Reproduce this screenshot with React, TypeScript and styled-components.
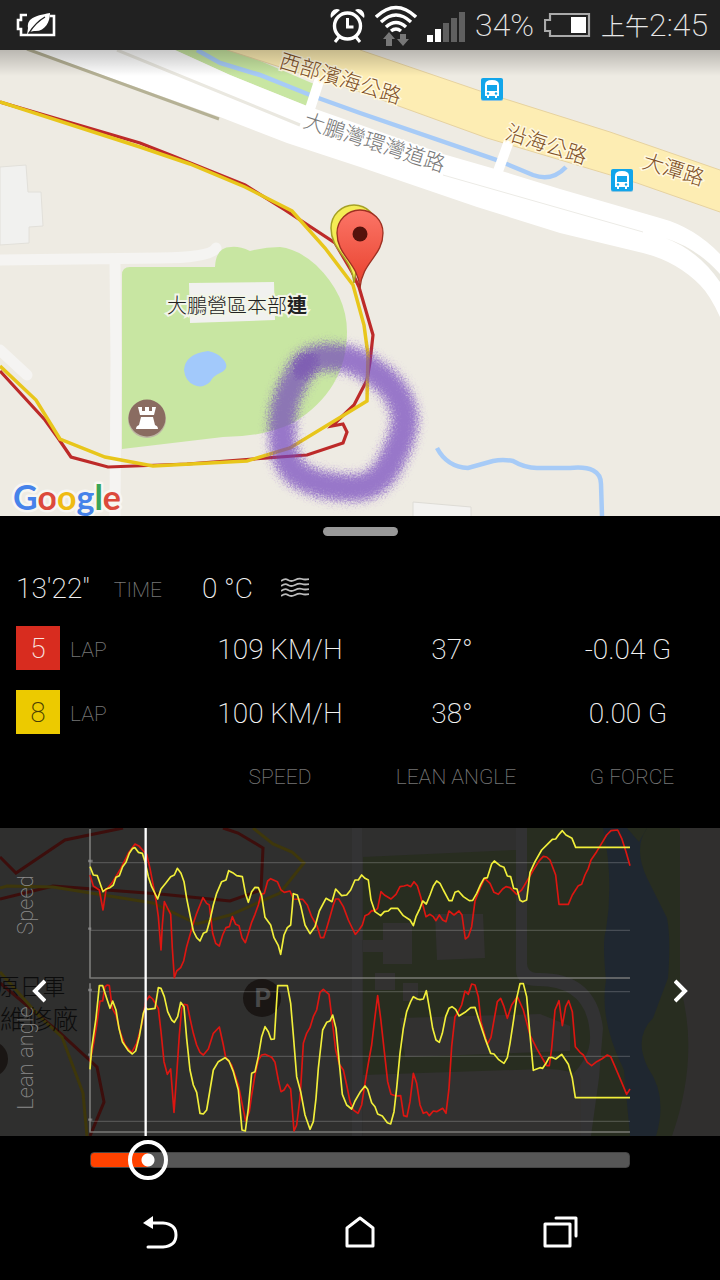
import React, { useState } from 'react';
import styled, { createGlobalStyle } from 'styled-components';

const Global = createGlobalStyle`
  * { box-sizing: border-box; }
  html, body { margin: 0; background: #000; }
  body { font-family: Roboto, "Noto Sans CJK TC", sans-serif; font-weight: 300; color: #f2f2f2; }
  button { font: inherit; color: inherit; background: none; border: 0; padding: 0; cursor: pointer; }
`;

const Screen = styled.main`
  display: flex;
  flex-direction: column;
  min-height: 100vh;
  background: #000;
`;

const StatusBar = styled.header`
  display: flex;
  align-items: center;
  height: 50px;
  padding: 0 12px 0 16px;
  gap: 10px;
  background: #212121;
  color: #e8e8e8;
  font-size: 32px;
  line-height: 50px;
  font-weight: 200;
  white-space: nowrap;
`;

const Spacer = styled.span`
  flex: 1;
`;

const Clock = styled.time`
  display: flex;
  align-items: center;
`;

const Meridiem = styled.span`
  font-size: 24px;
  font-family: "Noto Sans CJK TC", sans-serif;
  font-weight: 200;
`;

const Drawing = styled.svg`
  display: block;
  width: 100%;
  height: auto;
`;

const Icon = styled.svg`
  display: block;
  flex: none;
`;

const MapLabel = styled.text<{ $tone?: string; $size?: number }>`
  font-family: "Noto Sans CJK TC", sans-serif;
  font-size: ${p => p.$size ?? 21}px;
  font-weight: 300;
  fill: ${p => p.$tone ?? '#7d4e24'};
  text-anchor: middle;
  dominant-baseline: central;
  paint-order: stroke;
`;

const Wordmark = styled.text`
  font-family: Lato, sans-serif;
  font-size: 34px;
  font-weight: 700;
  paint-order: stroke;
  stroke: #f7f6f2;
  stroke-width: 5px;
  stroke-linejoin: round;
`;

const Panel = styled.section`
  display: flex;
  flex-direction: column;
  padding-bottom: 20px;
`;

const Handle = styled.button`
  align-self: center;
  width: 75px;
  height: 9px;
  margin: 11px 0 20px;
  border-radius: 5px;
  background: #999;
`;

const Summary = styled.div`
  display: flex;
  align-items: center;
  height: 60px;
  padding: 4px 16px 0;
  font-size: 28px;
`;

const Value = styled.span<{ $gap?: number }>`
  margin-left: ${p => p.$gap ?? 0}px;
  font-size: 28px;
  font-weight: 200;
`;

const Caption = styled.span<{ $gap?: number }>`
  margin-left: ${p => p.$gap ?? 0}px;
  padding-top: 4px;
  font-size: 21px;
  color: #777;
  font-weight: 200;
`;

const WindIcon = styled.svg`
  display: block;
  flex: none;
  margin-left: 28px;
`;

const Stats = styled.table`
  width: 100%;
  table-layout: fixed;
  border-collapse: collapse;
  font-size: 28px;
  line-height: 32px;
  font-weight: 200;
  td, th { padding: 0; height: 64px; text-align: center; font-weight: inherit; vertical-align: middle; }
  th:first-child { width: 192px; padding-left: 16px; }
  td { padding: 4px 0 0; }
  td + td { padding-right: 8px; }
  tfoot th { padding-top: 2px; font-size: 21px; line-height: 24px; color: #777; }
`;

const LapCell = styled.span`
  display: flex;
  align-items: center;
`;

const LapBadge = styled.span<{ $bg: string; $ink: string }>`
  display: grid;
  place-items: center;
  width: 44px;
  height: 44px;
  padding-top: 2px;
  background: ${p => p.$bg};
  color: ${p => p.$ink};
`;

const ChartArea = styled.section`
  position: relative;
  background: #2f2f2e;
`;

const Arrow = styled.button<{ $side: 'left' | 'right' }>`
  position: absolute;
  top: 53%;
  ${p => p.$side}: 23px;
  width: 32px;
  height: 40px;
  transform: translateY(-50%);
  display: grid;
  place-items: center;
`;

const AxisName = styled.text`
  font-size: 22px;
  font-weight: 200;
  fill: #8a8a8a;
  text-anchor: middle;
  dominant-baseline: central;
`;

const SliderRow = styled.div`
  display: flex;
  align-items: center;
  height: 48px;
  padding: 0 90px;
`;

const Slider = styled.input`
  appearance: none;
  flex: 1;
  min-width: 0;
  height: 16px;
  margin: 0;
  border-radius: 4px;
  border: 1px solid #444;
  background: linear-gradient(to right, #ff4200 var(--filled), #565656 var(--filled));
  &::-webkit-slider-thumb {
    appearance: none;
    width: 40px;
    height: 40px;
    border: 4px solid #fff;
    border-radius: 50%;
    background: radial-gradient(circle, #fff 6px, transparent 7px);
  }
`;

const NavBar = styled.nav`
  display: flex;
  height: 96px;
  padding: 0 60px;
`;

const NavButton = styled.button`
  flex: 1;
  display: grid;
  place-items: center;
`;

const PowerSaverIcon = () => (
  <Icon width="40" height="24" viewBox="0 0 40 24" fill="none" stroke="#fff" strokeWidth="2.6">
    <path d="M11 2H5v5H2v9h3v6h33V3h-4" />
    <path d="M12 15C11 6 17 3 34 0c0 9-5 19-16 18l-5 1-2 3" fill="#fff" stroke="none" />
    <path d="M13 20c5-8 9-12 16-16" stroke="#212121" strokeWidth="1.4" />
  </Icon>
);

const AlarmIcon = () => (
  <Icon width="35" height="36" viewBox="0 0 35 36" fill="none" stroke="#fff" strokeWidth="3.4">
    <circle cx="17.500" cy="19" r="13" />
    <path d="M17.500 11v9h6M9 30l-4 5M26 30l4 5" strokeWidth="3" />
    <path d="M1 11C-1 5 5 0 10 3zM34 11c2-6-4-11-9-8z" fill="#fff" stroke="none" />
  </Icon>
);

const WifiIcon = () => (
  <Icon width="42" height="41" viewBox="0 0 42 41" fill="none" stroke="#fff" strokeWidth="3.400">
    <path d="M1 12q20-19 40 0M6 17q15-14 30 0M11 22q10-9 20 0M16 26q5-4 10 0" />
    <path d="M14 27l6 7h-3v7h-6v-7H8zM28 41l-6-7h3v-5h6v5h3z" fill="#777" stroke="none" />
  </Icon>
);

const SignalIcon = () => (
  <Icon width="38" height="34" viewBox="0 0 38 34">
    <path d="M0 27h6v7H0zM8 21h6v13H8z" fill="#fff" />
    <path d="M16 15h6v19h-6zM24 10h6v24h-6zM32 4h6v30h-6z" fill="#606060" />
  </Icon>
);

const BatteryIcon = () => (
  <Icon width="47" height="24" viewBox="0 0 47 24">
    <path d="M6 1h39v22H6v-5H1V7h5z" fill="none" stroke="#aaa" strokeWidth="2.200" />
    <path d="M27 4h15v16H27z" fill="#fff" />
  </Icon>
);

const BusStop = ({ x, y }: { x: number; y: number }) => (
  <g transform={`translate(${x} ${y})`}>
    <rect x="-11" y="-10" width="22" height="22" rx="2" fill="#8fc4dd" />
    <rect x="-11" y="-11" width="22" height="22" rx="2" fill="#12a5ea" />
    <path d="M-7 7V-4q0-5 7-5t7 5V7H5v2H3V7h-6v2h-2V7z" fill="#fff" />
    <path d="M-5-4H5v6H-5z" fill="#12a5ea" />
    <circle cx="-4" cy="4.500" r="1.200" fill="#12a5ea" />
    <circle cx="4" cy="4.500" r="1.200" fill="#12a5ea" />
  </g>
);

const pinShape = 'M0 54C-2 28-23 22-23-1a23 23 0 0 1 46 0C23 22 2 28 0 54z';
const redTrack =
  'M0 52L140 93L173 106L245 135L285 160L335 193L352 222L359 237L373 285L370 312L367 330L354 355L332 376L343 374L347 382L343 393L307 405L187 414L108 417L71 407L58 388L45 370L0 321';
const yellowTrack =
  'M0 52L140 97L190 114L245 137L292 161L325 198L353 235L364 275L368 305L367 351L290 398L247 411L153 416L105 407L60 389L36 350L0 316';
const marker =
  'M328 307C312 307 304 312 298 325C286 345 282 360 282 380C283 402 284 410 296 423C312 434 330 437 353 438C374 438 386 425 394 405C402 390 406 375 404 362C400 345 388 330 372 321C356 309 342 307 328 307z';

const TrackMap = () => (
  <Drawing viewBox="0 0 720 466" role="img" aria-label="Track map">
    <defs>
      <linearGradient id="shade" x2="0" y2="1">
        <stop offset="0" stopColor="#000" stopOpacity=".22" />
        <stop offset="1" stopColor="#000" stopOpacity="0" />
      </linearGradient>
      <linearGradient id="pin" x2="0" y2="1">
        <stop offset="0" stopColor="#fb7567" />
        <stop offset="1" stopColor="#e8402c" />
      </linearGradient>
      <filter id="spray" x="-20%" y="-20%" width="140%" height="140%">
        <feGaussianBlur stdDeviation="4" result="soft" />
        <feTurbulence type="fractalNoise" baseFrequency=".6" numOctaves="2" seed="4" result="noise" />
        <feDisplacementMap in="soft" in2="noise" scale="12" xChannelSelector="R" yChannelSelector="G" />
      </filter>
    </defs>
    <rect width="720" height="466" fill="#eeebe3" />
    <path d="M175 0h60l79 34-7 22-77-31z" fill="#c8e6a2" />
    <path d="M227 0h133L483 42 610 82l110 38v42l-83-29-150-45-127-46-80-25z" fill="#fdedb3" />
    <path d="M360 0L483 42 610 82l110 38M227 0l53 17 80 25 127 46 150 45 83 29" fill="none" stroke="#e6d2a0" />
    <path d="M197 0l23 13 40 12 50 20 50 18 137 47 36 15q19 7 33-8" fill="none" stroke="#a7cbf7" strokeWidth="4.500" />
    <path d="M32 0h143l55 25 77 31 136 48 52 15 65 20 100 29q34 9 60 36v63q-10-22-20-32-24-24-57-32l-83-20-83-26-117-40-73-24-67-26z" fill="#fff" />
    <path d="M309 62l11-34M497 124l12-33" stroke="#fff" strokeWidth="10" />
    <path d="M117 0l183 75" stroke="#eae8e0" strokeWidth="3" />
    <path d="M443 125l200 57" stroke="#ecebe6" />
    <path d="M665 188q32 10 55 36v8q-22-32-55-44z" fill="#eae8e0" />
    <path d="M27-1l192 70" stroke="#b5b195" strokeWidth="3" />
    <path d="M0 117l26-2 2 27h13l2 34-14 1v16L0 195z" fill="#f1f1ef" stroke="#e2e0da" />
    <path d="M0 210l160-2q50 0 56-10M115 213l1 100-1 153M0 300l27 25" fill="none" stroke="#f5f4f2" strokeWidth="11" strokeLinecap="round" strokeLinejoin="round" />
    <path d="M122 225q0-8 8-8h85q1-20 16-20 8-1 19 4 15-4 30-4 18 2 36 18 31 30 31 67 0 58-54 91-30 14-70 14l-101 12z" fill="#c8e6a2" />
    <path d="M189 233l85-1 1 38-85 3z" fill="#f1f1ef" />
    <path d="M184 320q1-16 24-19 10 2 15 8 8 9-3 14-7 3-10 9-8 7-16 3-9-4-10-15z" fill="#a2c9fb" />
    <path d="M437 398q10 19 31 20l25-7q10-2 20 0 12 7 24 7h33q31-3 31 16l1 32" fill="none" stroke="#a7cbf7" strokeWidth="4.500" />
    <path d="M413 466v-14l58 5v9" fill="#f3f2f0" stroke="#dedcd6" />
    <path d={redTrack} fill="none" stroke="#bd2a29" strokeWidth="3.200" />
    <path d={yellowTrack} fill="none" stroke="#e8c61b" strokeWidth="3.500" />
    <g transform="translate(147 368)">
      <circle cy="1" r="19" fill="#bdb5a3" />
      <circle r="18.500" fill="#8a6c61" />
      <path d="M-9-11h4v4h3v-4h4v4h3v-4h4l-2 8H-7zM-6-1H6L8 7q3 1 3 4h-22q0-3 3-4z" fill="#fff" />
    </g>
    <path d={marker} fill="none" stroke="#7040bd" strokeOpacity=".68" strokeWidth="27" filter="url(#spray)" />
    <path d="M297 327q8-16 20-20" fill="none" stroke="#6636b3" strokeOpacity=".35" strokeWidth="22" filter="url(#spray)" />
    <g transform="translate(354 179)">
      <path d={pinShape} fill="#f4ec55" stroke="#a5a126" strokeWidth="1.500" />
    </g>
    <g transform="translate(360 184)">
      <path d={pinShape} fill="url(#pin)" stroke="#9e3022" strokeWidth="1.300" />
      <circle r="7.500" fill="#54120c" />
    </g>
    <g stroke="#fff8df" strokeWidth="3">
      <MapLabel transform="translate(341 27) rotate(17)">西部濱海公路</MapLabel>
      <MapLabel transform="translate(547 93) rotate(18)">沿海公路</MapLabel>
      <MapLabel transform="translate(674 118) rotate(17)">大潭路</MapLabel>
    </g>
    <MapLabel transform="translate(375 91) rotate(18)" $tone="#777" stroke="#fff" strokeWidth="3">大鵬灣環灣道路</MapLabel>
    <MapLabel x="237" y="254" $tone="#222" $size={20} stroke="#f2f5e8" strokeWidth="4">
      大鵬營區本部<tspan fontWeight="700">連</tspan>
    </MapLabel>
    <BusStop x={492} y={39} />
    <BusStop x={622} y={130} />
    <Wordmark x="13" y="460">
      <tspan fill="#4683ea">G</tspan><tspan fill="#dc4a3c">o</tspan><tspan fill="#efbb14">o</tspan>
      <tspan fill="#4683ea">g</tspan><tspan fill="#39a457">l</tspan><tspan fill="#dc4a3c">e</tspan>
    </Wordmark>
    <rect width="720" height="26" fill="url(#shade)" />
  </Drawing>
);

// Samples are recorded in two halves, each with x counted from its own start.
const halfLap = 810;
const series = (first: string, second: string) =>
  first + ' ' + second.split(' ').map(p => {
    const [x, y] = p.split(',').map(Number);
    return `${x + halfLap},${y}`;
  }).join(' ');

const speedRed = series(
  '30,150 40,183 58,195 69,255 78,195 95,175 120,135 145,85 165,57 178,64 190,78 200,88 210,130 228,225 235,275 243,375 247,300 253,230 263,250 272,268 277,370 283,458 290,438 302,428 311,408 320,365 330,330 340,295 350,265 360,240 369,218 380,235 388,240 398,325 407,355 418,363 428,330 438,308 448,305 457,275 467,298 477,302 486,338 496,353 505,325 515,292 525,268 535,240 543,208 553,205 563,168 572,161 592,170 603,195 613,202 630,198 640,222 668,223 682,240 695,275 712,305 722,338 731,338 740,310 750,275 760,240 767,222 776,222 790,245 805,285',
  '8,312 16,328 25,318 37,300 45,272 55,268 65,257 74,258 83,250 93,200 103,210 123,222 138,208 150,185 162,183 172,180 182,185 192,170 202,182 212,215 220,245 228,275 240,268 250,275 258,287 268,270 278,285 288,290 297,258 312,270 327,258 336,270 346,342 355,335 365,305 375,228 390,190 404,160 420,175 432,202 445,208 458,192 468,185 480,188 500,208 515,195 530,170 550,135 568,107 580,94 590,96 600,105 617,150 627,238 655,238 667,210 685,182 695,178 705,150 715,130 723,105 740,80 755,55 770,30 783,17 803,15 815,40 828,80 840,122'
);
const speedYellow = series(
  '30,125 40,150 52,152 60,175 69,200 78,192 90,188 100,180 108,157 118,152 128,125 138,112 148,85 158,70 165,68 175,82 187,85 195,110 205,155 215,185 233,222 243,192 257,175 272,155 283,150 292,130 303,145 312,170 320,220 330,270 340,318 350,338 360,348 370,325 380,320 390,285 400,240 410,205 425,170 438,165 446,137 458,143 470,152 487,155 497,208 505,232 515,200 525,187 535,188 545,212 555,277 572,300 582,338 595,362 602,388 612,330 622,308 632,300 637,245 640,206 652,210 662,242 675,300 690,326 705,305 718,258 738,220 756,230 767,192 785,212 800,210 812,195 825,165 835,165 845,150 855,160',
  '55,165 63,225 75,260 92,272 103,260 115,258 123,250 143,250 160,272 180,285 190,302 198,275 210,250 218,228 229,237 240,210 250,183 260,168 270,175 280,195 297,227 306,227 315,202 325,198 340,215 358,227 368,226 380,205 392,178 402,160 412,158 425,117 433,108 450,122 462,127 472,153 482,155 491,190 501,192 510,226 518,230 530,225 540,142 555,110 575,75 595,55 607,43 617,42 627,28 637,17 648,30 666,40 677,67 840,67'
);
const leanRed = series(
  '30,260 40,210 50,150 60,78 68,78 75,35 82,30 88,32 97,100 108,120 120,170 135,210 155,232 170,205 185,150 197,80 208,63 218,72 235,100 243,170 252,260 262,298 272,282 282,412 290,300 298,180 305,100 312,88 322,90 330,130 340,175 350,210 360,232 370,240 385,222 400,175 418,156 430,210 437,247 455,270 475,330 485,380 497,438 508,410 515,360 525,300 535,255 545,240 555,238 575,247 585,262 595,315 603,350 612,345 622,328 632,342 642,468 650,450 660,370 665,290 670,205 680,175 690,158 700,125 710,105 720,52 730,43 747,58 757,140 767,225 778,268 790,285 800,330',
  '0,380 10,405 24,415 35,390 45,325 55,265 65,210 75,125 83,62 92,130 103,230 113,320 123,358 138,363 152,362 161,422 171,425 180,380 190,295 200,325 210,390 220,415 230,411 238,422 250,408 260,410 278,400 288,415 297,340 305,215 315,125 325,110 335,90 345,48 355,58 365,27 375,30 385,65 393,140 412,208 423,187 433,130 442,80 452,70 462,95 472,130 485,90 502,65 520,105 540,180 560,220 580,255 590,272 598,272 605,220 615,105 627,77 637,152 647,95 656,77 667,110 676,215 690,232 700,240 712,262 725,272 740,260 755,252 772,240 782,245 795,275 810,310 830,358 840,342'
);
const leanYellow = series(
  '30,283 35,220 48,130 58,32 68,32 80,70 90,100 98,78 108,105 117,160 127,200 145,227 157,237 167,228 178,185 190,115 197,98 203,103 225,100 235,38 243,40 253,65 263,110 275,135 283,142 293,125 302,82 312,95 320,190 330,285 340,330 350,352 360,415 370,417 380,405 390,345 400,285 415,260 435,248 447,258 460,290 475,345 480,400 486,465 496,468 505,400 515,295 525,290 535,245 545,185 555,155 565,170 573,193 583,192 588,110 593,32 622,32 632,85 640,180 650,305 662,350 675,420 690,463 700,440 708,370 715,280 728,165 740,142 750,138 758,120 768,160 778,265 787,358 800,390',
  '5,402 15,378 30,352 45,333 53,343 65,383 75,395 83,417 97,423 112,443 122,447 132,410 140,340 150,235 160,160 170,110 182,80 190,65 202,72 210,74 220,72 229,47 240,110 248,160 258,195 268,202 277,175 287,125 297,100 306,95 317,103 327,123 345,112 362,98 375,97 390,145 405,190 422,235 432,237 445,253 462,265 472,248 480,205 490,140 500,70 510,26 520,26 530,65 540,180 550,286 570,278 578,280 588,265 597,248 605,247 617,252 635,238 655,268 667,310 676,368 840,368'
);

const DimMap = () => (
  <g fill="none">
    <path d="M363 29l153-7V0h204v308H363z" fill="#282d20" />
    <path d="M516 0h11v135q0 9 9 10 60-2 67 55l-4 50-8 58h-10v-48l-10-12q20-20 19-40-2-50-52-50-22 0-22-16z" fill="#323233" />
    <path d="M363 112h20v-17h29v41h-29v-12h-20zM375 145h20v17h-20zM403 155h15v18h-15zM435 86h48l2 44-48 2zM400 190l140-4 30 12v25l-165 6zM363 247l180-6q28-1 38 10v57H363z" fill="#323130" />
    <path d="M603 0h44q-14 20 0 50l20 40q4 20 1 60l-15 40q-20 20-5 50 20 28 8 68h-26l-6-66q-25-50-18-90-4-40 0-50 8-50-3-102z" fill="#1f2730" />
    <path d="M627 0h20l-8 14z" fill="#282d20" />
    <path d="M680 0h40v308h-48q28-80 8-150z" fill="#302f2e" />
    <path d="M352 0h10v308h-10z" fill="#333334" />
    <g strokeWidth="3">
      <path d="M0 29l16 16 49-33 58-12M223 0l15 5 25 15-2 42-31 11-70-7-107-8L0 71M0 155l60 50 37 34 7 35-14 34" stroke="#3c0e0c" />
      <path d="M0 60l7-2 46 1 100 16 44 21 33-9 50-22 24-30-12-11-19-8-20-16M0 144l40 45 22 20 21 56 4 43" stroke="#3e370b" />
    </g>
    <circle cx="-10" cy="231" r="18" fill="#1a1614" />
    <circle cx="262" cy="170" r="19" fill="#1a1614" />
    <MapLabel x="263" y="170" $tone="#484848" $size={26}><tspan fontFamily="Roboto" fontWeight="700">P</tspan></MapLabel>
    <MapLabel x="31" y="157" $tone="#0c0c0c" $size={23}>原日軍</MapLabel>
    <MapLabel x="39" y="189" $tone="#0c0c0c" $size={26}>維修廠</MapLabel>
  </g>
);

const Chart = () => (
  <Drawing viewBox="0 0 720 308" role="img" aria-label="Speed and lean angle by lap">
    <DimMap />
    <g transform="translate(80 -3) scale(.33333)" fill="none" strokeLinejoin="round">
      <path d="M30 113H1650M30 316H1650M30 500H1650M30 694H1650M30 889H1650" stroke="#fff" strokeOpacity=".18" strokeWidth="4" />
      <path d="M30 12V459H1650M30 475V921H1650" stroke="#8c8c8a" strokeOpacity=".8" strokeWidth="5" />
      <path d="M24 108h14M24 311h10M24 495h12M24 689h8M24 884h13" stroke="#999" strokeOpacity=".6" strokeWidth="7" />
      <g strokeWidth="5">
        <polyline points={speedRed} stroke="#dd1611" />
        <polyline points={speedYellow} stroke="#f1ef3a" />
        <g transform="translate(0 450)">
          <polyline points={leanRed} stroke="#dd1611" />
          <polyline points={leanYellow} stroke="#f1ef3a" />
        </g>
      </g>
      <path d="M197 9V933" stroke="#fff" strokeWidth="7" />
    </g>
    <AxisName transform="translate(25 77) rotate(-90)">Speed</AxisName>
    <AxisName transform="translate(25 230) rotate(-90)">Lean angle</AxisName>
  </Drawing>
);

const laps = [
  { lap: 5, bg: '#d82c1f', ink: '#f8e4e0', speed: '109 KM/H', lean: '37°', force: '-0.04 G' },
  { lap: 8, bg: '#ecca00', ink: '#4a4000', speed: '100 KM/H', lean: '38°', force: '0.00 G' },
];

export default function App() {
  const [position, setPosition] = useState(37);
  const filled = `calc(20px + (100% - 40px) * ${position / 500})`;

  return (
    <Screen>
      <Global />
      <StatusBar>
        <PowerSaverIcon />
        <Spacer />
        <AlarmIcon />
        <WifiIcon />
        <SignalIcon />
        <span>34%</span>
        <BatteryIcon />
        <Clock><Meridiem>上午</Meridiem>2:45</Clock>
      </StatusBar>
      <TrackMap />
      <Panel>
        <Handle aria-label="Resize panel" />
        <Summary>
          <Value>13'22"</Value>
          <Caption $gap={24}>TIME</Caption>
          <Value $gap={40}>0 °C</Value>
          <WindIcon width="28" height="22" viewBox="0 0 28 22" fill="none" stroke="#bbb" strokeWidth="1.800">
            {[3, 8, 13, 18].map(y => (
              <path key={y} d={`M0 ${y + 1}q4-3 7-1t7 0 7-1 7 0`} />
            ))}
          </WindIcon>
        </Summary>
        <Stats>
          <tbody>
            {laps.map(l => (
              <tr key={l.lap}>
                <th scope="row">
                  <LapCell>
                    <LapBadge $bg={l.bg} $ink={l.ink}>{l.lap}</LapBadge>
                    <Caption $gap={10}>LAP</Caption>
                  </LapCell>
                </th>
                <td>{l.speed}</td>
                <td>{l.lean}</td>
                <td>{l.force}</td>
              </tr>
            ))}
          </tbody>
          <tfoot>
            <tr>
              <th aria-hidden="true" />
              <th scope="col">SPEED</th>
              <th scope="col">LEAN ANGLE</th>
              <th scope="col">G FORCE</th>
            </tr>
          </tfoot>
        </Stats>
      </Panel>
      <ChartArea>
        <Chart />
        <Arrow $side="left" aria-label="Previous">
          <Icon width="14" height="24" viewBox="0 0 14 24" fill="none" stroke="#fff" strokeWidth="4"><path d="M13 2L3 12l10 10" /></Icon>
        </Arrow>
        <Arrow $side="right" aria-label="Next">
          <Icon width="14" height="24" viewBox="0 0 14 24" fill="none" stroke="#fff" strokeWidth="4"><path d="M1 2l10 10L1 22" /></Icon>
        </Arrow>
      </ChartArea>
      <SliderRow>
        <Slider
          type="range"
          aria-label="Position in lap"
          min={0}
          max={500}
          value={position}
          onChange={e => setPosition(Number(e.target.value))}
          style={{ '--filled': filled } as React.CSSProperties}
        />
      </SliderRow>
      <NavBar>
        <NavButton aria-label="Back">
          <Icon width="36" height="34" viewBox="0 0 36 34" fill="none" stroke="#fff" strokeWidth="3">
            <path d="M8 8h13q13 1 13 12t-13 12H6" strokeLinecap="round" />
            <path d="M1 8l10-7v13z" fill="#fff" stroke="none" />
          </Icon>
        </NavButton>
        <NavButton aria-label="Home">
          <Icon width="32" height="34" viewBox="0 0 32 34" fill="none" stroke="#fff" strokeWidth="3" strokeLinejoin="round">
            <path d="M3 13L16 3l13 10v18H3z" />
          </Icon>
        </NavButton>
        <NavButton aria-label="Recent apps">
          <Icon width="36" height="34" viewBox="0 0 36 34" fill="none" stroke="#fff" strokeWidth="3" strokeLinejoin="round">
            <path d="M3 9h25v22H3zM14 3h20v18" strokeLinecap="round" />
          </Icon>
        </NavButton>
      </NavBar>
    </Screen>
  );
}
